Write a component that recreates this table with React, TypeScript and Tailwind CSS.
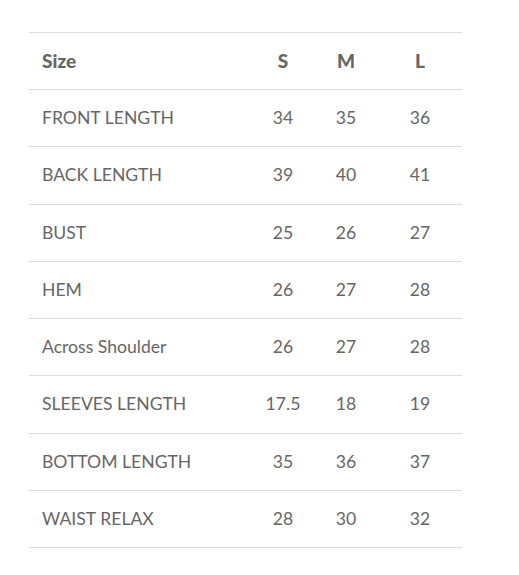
const rows: [string, string, string, string][] = [
  ["FRONT LENGTH", "34", "35", "36"],
  ["BACK LENGTH", "39", "40", "41"],
  ["BUST", "25", "26", "27"],
  ["HEM", "26", "27", "28"],
  ["Across Shoulder", "26", "27", "28"],
  ["SLEEVES LENGTH", "17.5", "18", "19"],
  ["BOTTOM LENGTH", "35", "36", "37"],
  ["WAIST RELAX", "28", "30", "32"],
];

function App() {
  return (
    <div className="min-h-screen bg-white pt-8 pl-[29px]" style={{ fontFamily: '"Lato", "Noto Sans", sans-serif' }}>
      <table className="w-[433px] table-fixed border-collapse text-[17.6px] text-[#666]">
        <colgroup>
          <col className="w-[223px]" />
          <col className="w-[62px]" />
          <col className="w-[64px]" />
          <col className="w-[84px]" />
        </colgroup>
        <thead>
          <tr className="h-[57px] border-y border-[#dddddd] text-[19px]">
            <th className="pl-[13px] text-left font-black">Size</th>
            <th className="text-center font-black">S</th>
            <th className="text-center font-black">M</th>
            <th className="text-center font-black">L</th>
          </tr>
        </thead>
        <tbody>
          {rows.map(([label, s, m, l]) => (
            <tr key={label} className="h-[57.3px] border-b border-[#dddddd]">
              <td className="pl-[13px]">{label}</td>
              <td className="text-center">{s}</td>
              <td className="text-center">{m}</td>
              <td className="text-center">{l}</td>
            </tr>
          ))}
        </tbody>
      </table>
    </div>
  );
}

export default App;
